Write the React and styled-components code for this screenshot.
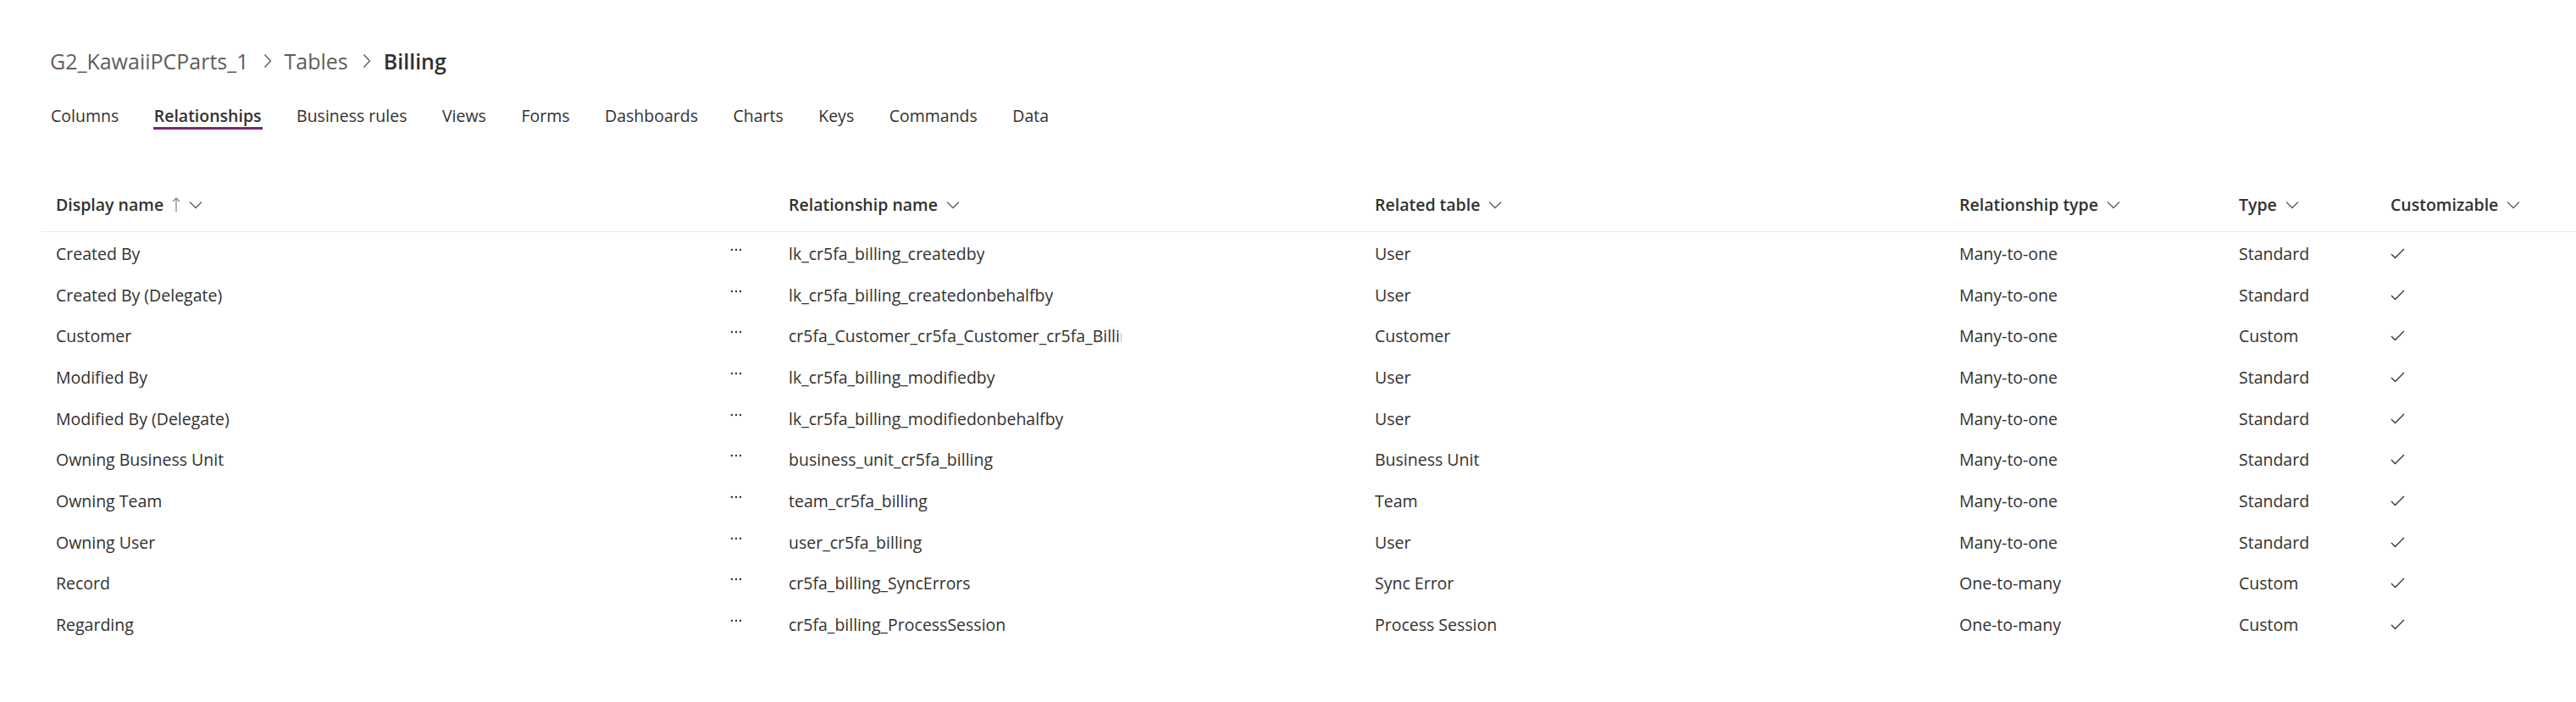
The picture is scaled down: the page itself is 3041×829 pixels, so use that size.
import React from 'react'
import styled, { createGlobalStyle } from 'styled-components'

const GlobalStyle = createGlobalStyle`
  html, body {
    margin: 0;
    padding: 0;
    background: #ffffff;
  }
  body {
    font-family: "Segoe UI", "Open Sans", "Noto Sans", sans-serif;
    color: #323130;
  }
`

const Page = styled.div`
  padding: 0 0 0 48px;
  min-height: 829px;
  box-sizing: border-box;
`

const Breadcrumb = styled.nav`
  display: flex;
  align-items: center;
  height: 44px;
  padding: 50px 0 0 11px;
  font-size: 25px;
`

const Crumb = styled.span`
  color: ${p => (p.$current ? '#323130' : '#605e5c')};
  font-weight: ${p => (p.$current ? 600 : 400)};
  white-space: nowrap;
`

const CrumbSep = styled.span`
  display: flex;
  align-items: center;
  padding: 0 15px 0 17px;
  color: #605e5c;
`

const Tabs = styled.div`
  display: flex;
  margin-top: 21px;
  gap: 17.5px;
`

const Tab = styled.div`
  position: relative;
  height: 44px;
  line-height: 44px;
  padding: 0 12px;
  font-size: 19.5px;
  font-weight: ${p => (p.$active ? 600 : 400)};
  color: #323130;
  white-space: nowrap;

  &::after {
    content: '';
    display: ${p => (p.$active ? 'block' : 'none')};
    position: absolute;
    left: 11px;
    right: 11px;
    bottom: 6px;
    height: 3px;
    background: #742774;
  }
`

const Table = styled.div`
  margin-top: 51px;
`

const cols = '865px 692px 690px 330px 179px 1fr'

const HeaderRow = styled.div`
  display: grid;
  grid-template-columns: ${cols};
  height: 63px;
  border-bottom: 1px solid #edebe9;
`

const HeaderCell = styled.div`
  display: flex;
  align-items: center;
  gap: 10px;
  padding-left: 18px;
  font-size: 19.5px;
  font-weight: 600;
  color: #323130;
  white-space: nowrap;
`

const Body = styled.div`
  padding-top: 1px;
`

const Row = styled.div`
  display: grid;
  grid-template-columns: ${cols};
  height: 48.7px;
`

const Cell = styled.div`
  display: flex;
  align-items: center;
  padding-left: 18px;
  font-size: 19.5px;
  color: #323130;
  white-space: nowrap;
  overflow: hidden;
`

const NameCell = styled(Cell)`
  justify-content: space-between;
  padding-right: 37px;
`

const Clip = styled.span`
  display: block;
  max-width: ${p => p.$max}px;
  overflow: hidden;
`

const MoreBtn = styled.span`
  display: flex;
  align-items: center;
  margin-top: -9px;
`

const Chevron = () => (
  <svg width="16" height="10" viewBox="0 0 16 10">
    <polyline points="1,1.5 8,8.5 15,1.5" fill="none" stroke="#605e5c" strokeWidth="1.3" />
  </svg>
)

const SortUp = () => (
  <svg width="10" height="18" viewBox="0 0 10 18">
    <path d="M5 1 V17 M1 5 L5 1 L9 5" fill="none" stroke="#8a8886" strokeWidth="1.3" />
  </svg>
)

const Check = () => (
  <svg width="17" height="13" viewBox="0 0 17 13">
    <polyline points="1,7 5.5,11.5 16,1" fill="none" stroke="#323130" strokeWidth="1.3" />
  </svg>
)

const More = () => (
  <svg width="14" height="4" viewBox="0 0 14 4">
    <circle cx="2" cy="2" r="1.2" fill="#323130" />
    <circle cx="7" cy="2" r="1.2" fill="#323130" />
    <circle cx="12" cy="2" r="1.2" fill="#323130" />
  </svg>
)

const CrumbChevron = () => (
  <svg width="10" height="18" viewBox="0 0 10 18">
    <polyline points="1.5,1.5 8.5,9 1.5,16.5" fill="none" stroke="#605e5c" strokeWidth="1.4" />
  </svg>
)

const tabs = ['Columns', 'Relationships', 'Business rules', 'Views', 'Forms', 'Dashboards', 'Charts', 'Keys', 'Commands', 'Data']

const rows = [
  ['Created By', 'lk_cr5fa_billing_createdby', 'User', 'Many-to-one', 'Standard'],
  ['Created By (Delegate)', 'lk_cr5fa_billing_createdonbehalfby', 'User', 'Many-to-one', 'Standard'],
  ['Customer', 'cr5fa_Customer_cr5fa_Customer_cr5fa_Billing', 'Customer', 'Many-to-one', 'Custom'],
  ['Modified By', 'lk_cr5fa_billing_modifiedby', 'User', 'Many-to-one', 'Standard'],
  ['Modified By (Delegate)', 'lk_cr5fa_billing_modifiedonbehalfby', 'User', 'Many-to-one', 'Standard'],
  ['Owning Business Unit', 'business_unit_cr5fa_billing', 'Business Unit', 'Many-to-one', 'Standard'],
  ['Owning Team', 'team_cr5fa_billing', 'Team', 'Many-to-one', 'Standard'],
  ['Owning User', 'user_cr5fa_billing', 'User', 'Many-to-one', 'Standard'],
  ['Record', 'cr5fa_billing_SyncErrors', 'Sync Error', 'One-to-many', 'Custom'],
  ['Regarding', 'cr5fa_billing_ProcessSession', 'Process Session', 'One-to-many', 'Custom'],
]

export default function App() {
  return (
    <Page>
      <GlobalStyle />
      <Breadcrumb>
        <Crumb>G2_KawaiiPCParts_1</Crumb>
        <CrumbSep><CrumbChevron /></CrumbSep>
        <Crumb>Tables</Crumb>
        <CrumbSep><CrumbChevron /></CrumbSep>
        <Crumb $current>Billing</Crumb>
      </Breadcrumb>

      <Tabs>
        {tabs.map(t => (
          <Tab key={t} $active={t === 'Relationships'}>{t}</Tab>
        ))}
      </Tabs>

      <Table>
        <HeaderRow>
          <HeaderCell>Display name <SortUp /> <Chevron /></HeaderCell>
          <HeaderCell>Relationship name <Chevron /></HeaderCell>
          <HeaderCell>Related table <Chevron /></HeaderCell>
          <HeaderCell>Relationship type <Chevron /></HeaderCell>
          <HeaderCell>Type <Chevron /></HeaderCell>
          <HeaderCell>Customizable <Chevron /></HeaderCell>
        </HeaderRow>
        <Body>
          {rows.map(r => (
            <Row key={r[0]}>
              <NameCell>
                <span>{r[0]}</span>
                <MoreBtn><More /></MoreBtn>
              </NameCell>
              <Cell><Clip $max={393}>{r[1]}</Clip></Cell>
              <Cell>{r[2]}</Cell>
              <Cell>{r[3]}</Cell>
              <Cell>{r[4]}</Cell>
              <Cell><Check /></Cell>
            </Row>
          ))}
        </Body>
      </Table>
    </Page>
  )
}
